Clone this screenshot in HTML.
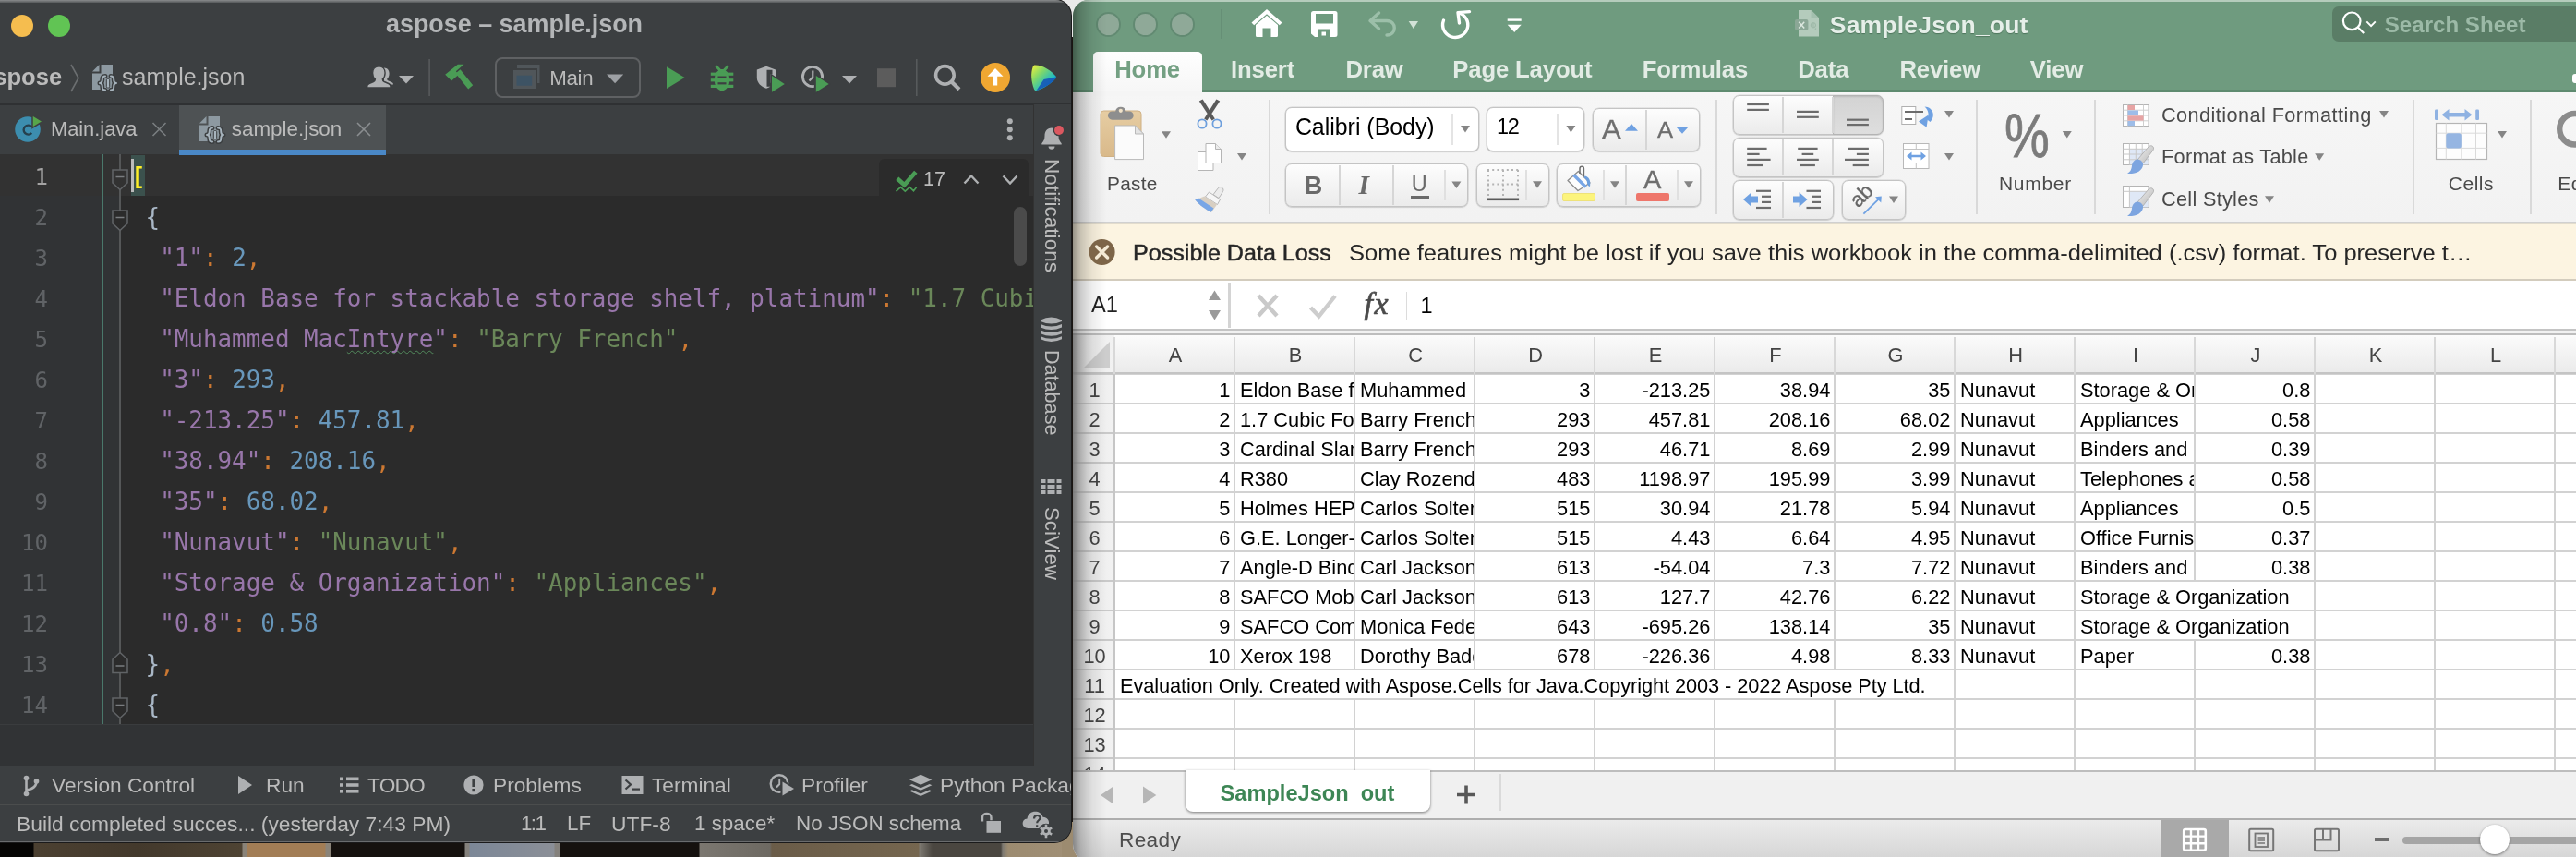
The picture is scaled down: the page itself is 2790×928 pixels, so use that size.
<!DOCTYPE html>
<html lang="en">
<head>
<meta charset="utf-8">
<title>aspose – sample.json / SampleJson_out</title>
<style>
*{box-sizing:border-box;margin:0;padding:0}
html,body{width:2790px;height:928px;overflow:hidden;background:#1b1612}
body{position:relative;font-family:"Liberation Sans",sans-serif;-webkit-font-smoothing:antialiased}
.abs{position:absolute}
.t{position:absolute;white-space:nowrap;line-height:1}
svg{position:absolute;overflow:visible}
#ide,#xl{will-change:transform}
/* ---------- desktop ---------- */
#desk{position:absolute;left:0;top:900px;width:1200px;height:28px;background:linear-gradient(90deg,#060504 0,#060504 36px,#4b4031 37px,#43392c 150px,#4e4333 262px,#8a8378 263px,#8a8378 267px,#a27d55 268px,#a27d55 352px,#8a8378 353px,#8a8378 358px,#15110e 359px,#15110e 503px,#84817c 504px,#84817c 508px,#7c8797 509px,#8b8f97 600px,#84817c 601px,#84817c 606px,#15110e 607px,#15110e 757px,#7b7770 758px,#6d6962 834px,#6a5c48 836px,#75664f 995px,#7d7971 996px,#4a4640 1010px,#4a4640 1084px,#7d7971 1086px,#9c8b70 1092px,#a3927a 1200px)}
/* ---------- IDE ---------- */
#ide{position:absolute;left:0;top:0;width:1160px;height:912px;background:#3c3f41;border-radius:0 17px 18px 0;overflow:hidden;box-shadow:0 0 0 1px #1a1a1b}
#ide .topline{position:absolute;left:0;top:0;width:1160px;height:3px;background:linear-gradient(#8a8c8d,#55585a)}
#ide .ui{color:#bbbbbb}
#tabsrow{position:absolute;left:0;top:112px;width:1119px;height:55px;background:#3c3f41;border-top:2px solid #323232}
#acttab{position:absolute;left:194px;top:114px;width:224px;height:48px;background:#4e5254}
#actline{position:absolute;left:194px;top:162px;width:224px;height:6px;background:#4a88c7;z-index:3}
#editor{position:absolute;left:0;top:167px;width:1119px;height:617px;background:#2b2b2b;overflow:hidden}
#curline{position:absolute;left:0;top:0;width:1119px;height:45px;background:#323232}
#gutbg{position:absolute;left:0;top:0;width:130px;height:617px;background:#313335}
.ln{position:absolute;left:0;width:52px;text-align:right;font-family:"DejaVu Sans Mono","Liberation Mono",monospace;font-size:24px;line-height:44px;height:44px;color:#606366}
.cl{position:absolute;left:142px;white-space:pre;font-family:"DejaVu Sans Mono","Liberation Mono",monospace;font-size:25.9px;line-height:44px;height:44px;color:#a9b7c6}
.k{color:#9876aa}.s{color:#6a8759}.n{color:#6897bb}.p{color:#cc7832}
#below{position:absolute;left:0;top:784px;width:1119px;height:45px;background:#313335;border-top:1px solid #3a3c3e}
#rstrip{position:absolute;left:1119px;top:113px;width:41px;height:716px;background:#3c3f41;border-left:1px solid #323232}
#toolbar2{position:absolute;left:0;top:829px;width:1160px;height:42px;background:#3c3f41;border-top:1px solid #36393b}
#status{position:absolute;left:0;top:871px;width:1160px;height:41px;background:#3c3f41;border-top:1px solid #4b4d4d;border-bottom:1px solid #6a6c6e}
.vt{position:absolute;white-space:nowrap;line-height:1;color:#bbbbbb;transform-origin:0 0;transform:rotate(90deg)}
/* ---------- Excel ---------- */
#xl{position:absolute;left:1162px;top:0;width:1640px;height:934px;background:#f5f5f5;border-radius:17px 0 0 20px;overflow:hidden}
#xli{position:absolute;left:-1162px;top:0;width:2802px;height:940px}
#xl .green{position:absolute;left:1162px;top:0;width:1640px;height:100px;background:#6f9b7f}
#xl .greentop{position:absolute;left:1162px;top:0;width:1640px;height:2px;background:#b5ccbc}
#hometab{position:absolute;left:1184px;top:56px;width:118px;height:46px;background:linear-gradient(#fefefe,#f6f6f6);border-radius:5px 5px 0 0}
.rt{position:absolute;white-space:nowrap;line-height:1;font-weight:bold;color:#e3ece5;font-size:25.7px;top:62.8px;letter-spacing:-.15px}
#ribbon{position:absolute;left:1162px;top:100px;width:1640px;height:142px;background:linear-gradient(#f6f6f6,#f2f2f2);border-bottom:2px solid #d0d0d0}
.vsep{position:absolute;width:2px;background:#d9d9d9;top:108px;height:124px}
.box{position:absolute;border:1px solid #c4c4c4;border-radius:7px;background:linear-gradient(#fdfdfd,#ebebeb);box-shadow:0 0 0 .6px rgba(0,0,0,.13),0 1px 1.500px rgba(0,0,0,.1)}
.wbox{position:absolute;border:1px solid #c4c4c4;border-radius:7px;background:#fff;box-shadow:0 0 0 .6px rgba(0,0,0,.13),0 1px 1.500px rgba(0,0,0,.1)}
.dv{position:absolute;width:2px;background:#d6d6d6}
.rl{position:absolute;white-space:nowrap;line-height:1;color:#4a4a4a}
#msg{position:absolute;left:1162px;top:242px;width:1640px;height:62px;background:#fcf4e1;border-top:1px solid #e2dccd;border-bottom:2px solid #d3ccbd}
#fbar{position:absolute;left:1162px;top:304px;width:1640px;height:53px;background:#fff}
#fbar2{position:absolute;left:1162px;top:356px;width:1640px;height:7px;background:linear-gradient(#c4c4c4 0,#c4c4c4 2px,#f1f1f1 2px,#f1f1f1 5px,#bdbdbd 5px)}
#namebox{position:absolute;left:1164px;top:306px;width:169px;height:49px;background:#fff;border-right:3px solid #d4d4d4}
#grid{position:absolute;left:1162px;top:363px;width:1640px;height:471px;background:#fff;overflow:hidden}
#gi{position:absolute;left:-1162px;top:-363px;width:2802px;height:940px}
#colhdr{position:absolute;left:1162px;top:363px;width:1640px;height:42px;background:linear-gradient(#fbfbfb,#eaeaea)}
#rowhdr{position:absolute;left:1162px;top:363px;width:45px;height:471px;background:linear-gradient(90deg,#cfcfcf,#ececec 35%,#f2f2f2)}
.hl{position:absolute;left:1207px;width:1600px;height:2px;background:#d2d2d2}
.hlr{position:absolute;left:1162px;width:46px;height:2px;background:#c9c9c9}
.vl{position:absolute;top:405px;width:2px;height:430px;background:#d2d2d2}
.vh{position:absolute;top:365px;width:2px;height:40px;background:#d8d8d8}
.ch{position:absolute;top:365px;height:40px;line-height:40px;width:130px;text-align:center;font-size:21.8px;color:#444}
.rh{position:absolute;left:1164px;width:43px;text-align:center;font-size:21.8px;color:#444;line-height:34px;height:32px}
.c{position:absolute;height:30px;line-height:34px;font-size:21.8px;color:#000;white-space:nowrap;overflow:hidden;background:#fff;width:128px}
.c.r{text-align:right;padding-right:3.6px}
.c.l{text-align:left;padding-left:5px}
#sheetbar{position:absolute;left:1162px;top:834px;width:1640px;height:54px;background:#f0f0f0;border-top:2px solid #bdbdbd}
#sheettab{position:absolute;left:1284px;top:834px;width:265px;height:45px;background:#fff;border-radius:0 0 8px 8px;box-shadow:0 1px 3px rgba(0,0,0,.5)}
#xstatus{position:absolute;left:1162px;top:886px;width:1640px;height:54px;background:linear-gradient(#ebebeb,#d0d0d0);border-top:2px solid #aeaeae}
#xshadow{position:absolute;left:1160px;top:0;width:38px;height:940px;background:linear-gradient(90deg,rgba(0,0,0,.44),rgba(0,0,0,.2) 28%,rgba(0,0,0,.07) 60%,rgba(0,0,0,0));pointer-events:none}
#xshadowg{display:none}
</style>
</head>
<body>
<div id="topgap" class="abs" style="left:1130px;top:0;width:80px;height:40px;background:#e9e9e9"></div>
<div id="desk"></div>
<div id="deskr" class="abs" style="left:1150px;top:890px;width:40px;height:38px;background:#9c8b70"></div>

<!-- =================== IDE WINDOW =================== -->
<div id="ide">
  <div class="topline"></div>
  <!-- title -->
  <div class="abs" style="left:12px;top:16px;width:24px;height:24px;border-radius:50%;background:#f5bd4f"></div>
  <div class="abs" style="left:52px;top:16px;width:24px;height:24px;border-radius:50%;background:#61c454"></div>
  <span class="t" style="left:418px;top:13.2px;font-size:26.9px;font-weight:bold;color:#b4b6b8">aspose – sample.json</span>

  <!-- toolbar -->
  <span class="t ui" style="left:-21px;top:70.6px;font-size:25.6px;font-weight:bold">aspose</span>
  <span class="t ui" style="left:132px;top:71px;font-size:25px">sample.json</span>
  <div class="abs" style="left:536px;top:62px;width:158px;height:44px;border:2px solid #5f6163;border-radius:8px"></div>
  <span class="t ui" style="left:595.3px;top:73.8px;font-size:22.3px;letter-spacing:-.35px">Main</span>
  <div class="abs" style="left:0;top:112px;width:1160px;height:2px;background:#2f3133"></div>

  <!-- tabs -->
  <div id="acttab"></div><div id="actline"></div>
  <span class="t ui" style="left:55px;top:129.2px;font-size:21.8px">Main.java</span>
  <span class="t ui" style="left:250.8px;top:129px;font-size:22.4px">sample.json</span>

  <!-- editor -->
  <div id="editor">
    <div id="gutbg"></div>
    <div id="curline"></div>
    <div class="abs" style="left:110px;top:0;width:2px;height:617px;background:#4a786b"></div>
    <div class="abs" style="left:129px;top:0;width:2px;height:617px;background:#555758"></div>
    <div class="abs" style="left:142px;top:1px;width:15px;height:44px;background:#3b514d"></div>
    <div class="abs" style="left:142px;top:5px;width:3px;height:36px;background:#bbbbbb"></div>
    <div class="ln" style="top:2.7px;color:#a4a3a3">1</div>
    <div class="ln" style="top:46.7px">2</div>
    <div class="ln" style="top:90.7px">3</div>
    <div class="ln" style="top:134.7px">4</div>
    <div class="ln" style="top:178.7px">5</div>
    <div class="ln" style="top:222.7px">6</div>
    <div class="ln" style="top:266.7px">7</div>
    <div class="ln" style="top:310.7px">8</div>
    <div class="ln" style="top:354.7px">9</div>
    <div class="ln" style="top:398.7px">10</div>
    <div class="ln" style="top:442.7px">11</div>
    <div class="ln" style="top:486.7px">12</div>
    <div class="ln" style="top:530.7px">13</div>
    <div class="ln" style="top:574.7px">14</div>
    <div class="cl" style="top:1.7px"><b style="color:#ffef28">[</b></div>
    <div class="cl" style="top:45.7px"> {</div>
    <div class="cl" style="top:89.7px">  <span class="k">"1"</span><span class="p">:</span> <span class="n">2</span><span class="p">,</span></div>
    <div class="cl" style="top:133.7px">  <span class="k">"Eldon Base for stackable storage shelf, platinum"</span><span class="p">:</span> <span class="s">"1.7 Cubic Foot Compact \"Cube\" Office Refrigerators"</span><span class="p">,</span></div>
    <div class="cl" style="top:177.7px">  <span class="k">"Muhammed Mac<span style="text-decoration:underline wavy #528a5c 1.3px;text-underline-offset:3px;text-decoration-skip-ink:none">Intyre</span>"</span><span class="p">:</span> <span class="s">"Barry French"</span><span class="p">,</span></div>
    <div class="cl" style="top:221.7px">  <span class="k">"3"</span><span class="p">:</span> <span class="n">293</span><span class="p">,</span></div>
    <div class="cl" style="top:265.7px">  <span class="k">"-213.25"</span><span class="p">:</span> <span class="n">457.81</span><span class="p">,</span></div>
    <div class="cl" style="top:309.7px">  <span class="k">"38.94"</span><span class="p">:</span> <span class="n">208.16</span><span class="p">,</span></div>
    <div class="cl" style="top:353.7px">  <span class="k">"35"</span><span class="p">:</span> <span class="n">68.02</span><span class="p">,</span></div>
    <div class="cl" style="top:397.7px">  <span class="k">"Nunavut"</span><span class="p">:</span> <span class="s">"Nunavut"</span><span class="p">,</span></div>
    <div class="cl" style="top:441.7px">  <span class="k">"Storage &amp; Organization"</span><span class="p">:</span> <span class="s">"Appliances"</span><span class="p">,</span></div>
    <div class="cl" style="top:485.7px">  <span class="k">"0.8"</span><span class="p">:</span> <span class="n">0.58</span></div>
    <div class="cl" style="top:529.7px"> }<span class="p">,</span></div>
    <div class="cl" style="top:573.7px"> {</div>
    <!-- inspection widget -->
    <div class="abs" style="left:952px;top:5px;width:162px;height:41px;background:#2b2b2b;border-radius:6px 6px 0 0"></div>
    <span class="t ui" style="left:1000px;top:17px;font-size:21.5px">17</span>
    <!-- scrollbar thumb -->
    <div class="abs" style="left:1098px;top:57px;width:14px;height:64px;border-radius:7px;background:#4b4b4b"></div>
  </div>
  <div id="below"></div>
  <div id="rstrip"></div>
  <span class="vt" style="left:1149.500px;top:171.500px;font-size:22.600px">Notifications</span>
  <span class="vt" style="left:1150px;top:379px;font-size:21.600px">Database</span>
  <span class="vt" style="left:1150px;top:548.500px;font-size:22.300px">SciView</span>

  <!-- bottom tool window bar -->
  <div id="toolbar2"></div>
  <span class="t ui" style="left:56px;top:838.9px;font-size:22.7px">Version Control</span>
  <span class="t ui" style="left:288px;top:838.9px;font-size:22.7px">Run</span>
  <span class="t ui" style="left:398px;top:838.9px;font-size:22.7px;letter-spacing:-.8px">TODO</span>
  <span class="t ui" style="left:534px;top:838.9px;font-size:22.7px">Problems</span>
  <span class="t ui" style="left:706px;top:838.9px;font-size:22.7px">Terminal</span>
  <span class="t ui" style="left:868px;top:838.9px;font-size:22.7px">Profiler</span>
  <span class="t ui" style="left:1018px;top:838.9px;font-size:22.7px">Python Packages</span>
  <!-- status bar -->
  <div id="status"></div>
  <span class="t ui" style="left:18px;top:880.9px;font-size:22.8px">Build completed succes... (yesterday 7:43 PM)</span>
  <span class="t ui" style="left:564px;top:880.9px;font-size:22.4px;letter-spacing:-1.6px">1:1</span>
  <span class="t ui" style="left:614px;top:880.9px;font-size:22.4px">LF</span>
  <span class="t ui" style="left:662px;top:880.9px;font-size:22.8px">UTF-8</span>
  <span class="t ui" style="left:752px;top:880.9px;font-size:22.4px">1 space*</span>
  <span class="t ui" style="left:862px;top:880.9px;font-size:22.4px">No JSON schema</span>
<svg style="left:0;top:0" width="1160" height="912" viewBox="0 0 1160 912">
  <defs>
    <g id="jsonic">
      <path d="M9.5 0H22V27H0V9.5H9.5Z" fill="#8d99a1"/>
      <path d="M0 7.5L7.5 0V7.5Z" fill="#8d99a1"/>
      <g fill="none" stroke-linecap="round" stroke-linejoin="round">
        <path d="M14 12.5c-3 0-3.2 1.2-3.2 3.6s-.6 3.9-2.8 3.9c2.2 0 2.8 1.5 2.8 3.9s.2 3.6 3.2 3.6M20 12.5c3 0 3.2 1.2 3.2 3.6s.6 3.9 2.8 3.9c-2.2 0-2.8 1.5-2.8 3.9s-.2 3.6-3.2 3.6" stroke="#3c3f41" stroke-width="5"/>
        <path d="M14 12.5c-3 0-3.2 1.2-3.2 3.6s-.6 3.9-2.8 3.9c2.2 0 2.8 1.5 2.8 3.9s.2 3.6 3.2 3.6M20 12.5c3 0 3.2 1.2 3.2 3.6s.6 3.9 2.8 3.9c-2.2 0-2.8 1.5-2.8 3.9s-.2 3.6-3.2 3.6" stroke="#a7b4bd" stroke-width="2"/>
      </g>
      <rect x="15.3" y="15.5" width="3.4" height="9.5" rx="1.2" fill="#a7b4bd" stroke="#3c3f41" stroke-width="1"/>
    </g>
    <linearGradient id="lg1" x1="0" y1="0" x2="1" y2="1">
      <stop offset="0" stop-color="#f6f03a"/><stop offset=".35" stop-color="#7fd86a"/><stop offset=".7" stop-color="#19b8c9"/><stop offset="1" stop-color="#1563c8"/>
    </linearGradient>
  </defs>
  <!-- breadcrumb chevron + file icon -->
  <path d="M77 70L85 84.5L77 99" stroke="#6b6e70" stroke-width="1.6" fill="none"/>
  <use href="#jsonic" x="100" y="70"/>
  <!-- users icon -->
  <g fill="#aeb0b2">
    <path d="M416 73.5c3.6 0 5.6 2.8 5.6 6.2 0 2.6-1 4.6-2.4 5.8 0 1 .5 1.6 1.6 2.1l3.4 1.4c1.2.5 1.8 1.3 1.8 2.4H416Z"/>
    <path d="M410.5 71.8c4.2 0 6.6 3.1 6.6 7.2 0 3-1.1 5.3-2.8 6.7 0 1.400.600 2.200 1.900 2.800l4.600 2c1.700.7 2.400 2 2.400 4.500H397.500c0-2.500.7-3.800 2.400-4.500l4.600-2c1.300-.6 1.900-1.400 1.900-2.800-1.700-1.400-2.800-3.700-2.800-6.700 0-4.100 2.400-7.200 6.900-7.200Z" stroke="#3c3f41" stroke-width="1.4"/>
  </g>
  <path d="M432 82H448L440 90.5Z" fill="#aeb0b2"/>
  <rect x="464.300" y="64" width="1.600" height="40" fill="#575a5c"/>
  <!-- hammer -->
  <g fill="#4a9c55">
    <path d="M482.200 80.800L495.800 69.800H502.500L493.800 77.200L496.800 80.800L489 87.500Z"/>
    <path d="M493.500 79.500L498.500 75.300L512.200 92.200L507.200 96.600Z"/>
  </g>
  <!-- run config icon -->
  <path d="M560 70H584.500V90H582V74H560Z" fill="#50565a"/>
  <rect x="556" y="76" width="24" height="20" fill="#50565a"/>
  <rect x="559.500" y="81.700" width="16.700" height="11" fill="#3d5364"/>
  <path d="M657 80.500H675.200L666.100 90.200Z" fill="#9da0a4"/>
  <!-- run -->
  <path d="M722 72.200L741.600 84.100L722 96Z" fill="#4a9c55"/>
  <!-- debug bug -->
  <g fill="#4a9c55">
    <ellipse cx="782" cy="86.500" rx="8.300" ry="11.600"/>
    <path d="M774.500 72.500l2-2 4.200 4.500h2.600l4.200-4.500 2 2-3.900 4.200h-7.200z"/>
    <rect x="769.800" y="78.600" width="24.500" height="3.200"/>
    <rect x="769.800" y="85.200" width="24.500" height="3.200"/>
    <rect x="769.800" y="91.800" width="24.500" height="3.200"/>
  </g>
  <rect x="777.500" y="82.500" width="9" height="2.200" fill="#3c3f41"/>
  <rect x="777.500" y="89.200" width="9" height="2.200" fill="#3c3f41"/>
  <!-- coverage -->
  <path d="M819.800 75.500L830 71.800L840 75.500V84c0 6-4.500 9.800-10 11.800-5.500-2-10.200-5.800-10.200-11.800Z" fill="#aeb0b2"/>
  <path d="M830.500 75.800h6v4.500h-2.500v9.500h2.500v4h-6z" fill="#3c3f41"/>
  <path d="M834.200 79.200L852 90.900L834.200 102.500Z" fill="#3c3f41"/>
  <path d="M836 82L849.800 90.900L836 99.700Z" fill="#4a9c55"/>
  <!-- profiler -->
  <circle cx="880" cy="83" r="10.600" fill="none" stroke="#aeb0b2" stroke-width="2.800"/>
  <path d="M880.300 76.500V83.500L876.500 87.500" fill="none" stroke="#aeb0b2" stroke-width="2.200"/>
  <path d="M881.800 79.200L900 90.900L881.800 102.500Z" fill="#3c3f41"/>
  <path d="M883.800 82L897.700 90.900L883.800 99.700Z" fill="#4a9c55"/>
  <path d="M912 82H928L920 90.500Z" fill="#aeb0b2"/>
  <rect x="950" y="74.200" width="20" height="20" fill="#5c5c5c"/>
  <rect x="992" y="64" width="1.600" height="40" fill="#575a5c"/>
  <!-- search -->
  <circle cx="1023.400" cy="81.400" r="9.800" fill="none" stroke="#aeb0b2" stroke-width="3.600"/>
  <path d="M1030.500 88.500L1039 96.800" stroke="#aeb0b2" stroke-width="4.200" fill="none"/>
  <!-- update -->
  <circle cx="1078" cy="83.900" r="16" fill="#f0a732"/>
  <path d="M1078 74L1086.500 82.800H1080.200V92.500H1075.800V82.800H1069.500Z" fill="#fff"/>
  <!-- logo -->
  <path d="M1121 70.500C1130 70.500 1139 77 1143.500 82.500c.7 .9 .7 1.700 0 2.400C1138 91 1130 96 1122.500 98c-1.200 .3-2-.2-2.500-1.400C1117 88 1116 80 1118.800 72c.4-1 1.200-1.500 2.200-1.500Z" fill="url(#lg1)"/>
  <path d="M1130.500 86L1144 83.500c.3 .5 .2 1-.5 1.600C1138 91 1130 96 1122.500 98Z" fill="#1450b8" opacity=".85"/>
  <!-- tab icons -->
  <circle cx="30" cy="140" r="13.800" fill="#3c8dae"/>
  <path d="M34.300 137.200a5 5 0 1 0 0 6.800" fill="none" stroke="#26404d" stroke-width="2.400"/>
  <path d="M35 124.500L46.500 131.500L35 138.500Z" fill="#57a64a" stroke="#3c3f41" stroke-width="1.500"/>
  <path d="M165.500 133L179.500 147M179.500 133L165.500 147" stroke="#7a7e80" stroke-width="1.600"/>
  <use href="#jsonic" x="216" y="126"/>
  <path d="M387 133L401 147M401 133L387 147" stroke="#8a8e90" stroke-width="1.600"/>
  <circle cx="1093.800" cy="131.300" r="3" fill="#aeb0b2"/><circle cx="1093.800" cy="140.300" r="3" fill="#aeb0b2"/><circle cx="1093.800" cy="149.200" r="3" fill="#aeb0b2"/>
  <!-- bell -->
  <path d="M1139 138.500c5 0 7.500 3.800 7.500 8.500 0 4 1.200 6 3.200 8.200v1.300h-21.400v-1.300c2-2.200 3.200-4.200 3.200-8.200 0-4.700 2.500-8.500 7.500-8.500Z" fill="#aeb0b2"/>
  <path d="M1135.500 158.500h7c0 2-1.500 3.300-3.500 3.300s-3.500-1.300-3.500-3.300Z" fill="#aeb0b2"/>
  <circle cx="1147" cy="141" r="6.300" fill="#3c3f41"/><circle cx="1147" cy="141" r="5" fill="#db5860"/>
  <!-- fold markers -->
  <g fill="#2b2b2b" stroke="#606366" stroke-width="1.600">
    <path d="M122 184H138V198L130 205.500L122 198Z" fill="#323232"/>
    <path d="M122 228H138V242L130 249.500L122 242Z"/>
    <path d="M122 728.500H138V714L130 706.500L122 714Z"/>
    <path d="M122 756H138V770L130 777.500L122 770Z"/>
  </g>
  <path d="M125.500 191.500H134.500M125.500 235.500H134.500M125.500 721H134.500M125.500 763.500H134.500" stroke="#7a7d80" stroke-width="1.600"/>
  <!-- inspection widget -->
  <path d="M971.800 193.300L979.500 200.200L991.800 186.300" fill="none" stroke="#4a9c55" stroke-width="4.600"/>
  <path d="M970.500 207.200L975.500 202.600L980.300 207.200L985.200 202.600L989.500 206.700L992.600 202.800" fill="none" stroke="#4a9c55" stroke-width="1.600"/>
  <path d="M1044.500 198.500L1052 190.500L1059.500 198.500" fill="none" stroke="#aeb0b2" stroke-width="2.400"/>
  <path d="M1086.500 190.500L1094 198.500L1101.500 190.500" fill="none" stroke="#aeb0b2" stroke-width="2.400"/>
  <!-- right strip icons -->
  <g fill="#aeb0b2">
    <path d="M1127 346.500q11.500-6 23 0v1.500q-11.500 5-23 0zM1127 351q11.500 5 23 0v3.600q-11.500 5-23 0zM1127 357.600q11.500 5 23 0v3.600q-11.500 5-23 0zM1127 364.200q11.500 5 23 0v3q-11.500 5.500-23 0z"/>
    <path d="M1127.500 519h5v4h-5zM1134.500 519h8v4h-8zM1144.500 519h5v4h-5zM1127.500 525h5v4h-5zM1134.500 525h8v4h-8zM1144.500 525h5v4h-5zM1127.500 531h5v4h-5zM1134.500 531h8v4h-8zM1144.500 531h5v4h-5z"/>
  </g>
  <!-- bottom tool bar icons -->
  <g fill="none" stroke="#aeb0b2" stroke-width="2.600">
    <circle cx="28.500" cy="842.500" r="2.800" fill="#aeb0b2" stroke="none"/>
    <circle cx="28.500" cy="859.500" r="2.800" fill="#aeb0b2" stroke="none"/>
    <circle cx="39.500" cy="846" r="2.800" fill="#aeb0b2" stroke="none"/>
    <path d="M28.500 842.500V859.500M39.500 846c0 6-4 8.500-11 9.500"/>
  </g>
  <path d="M258 840L273 850L258 860Z" fill="#aeb0b2"/>
  <g fill="#aeb0b2">
    <rect x="368" y="841.500" width="4" height="3.600"/><rect x="375" y="841.500" width="13.500" height="3.600"/>
    <rect x="368" y="848.200" width="4" height="3.600"/><rect x="375" y="848.200" width="13.500" height="3.600"/>
    <rect x="368" y="855" width="4" height="3.600"/><rect x="375" y="855" width="13.500" height="3.600"/>
  </g>
  <circle cx="513" cy="850" r="10.600" fill="#aeb0b2"/>
  <rect x="511.400" y="843.500" width="3.200" height="8.500" fill="#3c3f41"/><rect x="511.400" y="854" width="3.200" height="3.200" fill="#3c3f41"/>
  <rect x="673.500" y="840" width="23" height="20" fill="#aeb0b2"/>
  <path d="M677.500 844.500L683 849.500L677.500 854.500" fill="none" stroke="#3c3f41" stroke-width="2.200"/>
  <rect x="684.500" y="853.500" width="8.500" height="2.200" fill="#3c3f41"/>
  <circle cx="844" cy="848.500" r="9.300" fill="none" stroke="#aeb0b2" stroke-width="2.400"/>
  <path d="M844.300 843V849L841 852.500" fill="none" stroke="#aeb0b2" stroke-width="2"/>
  <path d="M845.500 843L863.500 854L845.500 865Z" fill="#3c3f41"/>
  <path d="M847.500 846.500L860 854L847.500 861.500Z" fill="#aeb0b2"/>
  <g fill="#aeb0b2">
    <path d="M997.200 838.700L1009.400 844.200L997.200 849.700L985 844.200Z"/>
    <path d="M987.800 849L985 850.300L997.200 855.800L1009.400 850.300L1006.600 849L997.200 853.200Z"/>
    <path d="M987.800 855.200L985 856.500L997.200 862L1009.400 856.500L1006.600 855.200L997.200 859.400Z"/>
  </g>
  <!-- status icons -->
  <path d="M1064 889.500v-4.300c0-5.800 9.500-5.800 9.500 0v3" fill="none" stroke="#aeb0b2" stroke-width="2.400"/>
  <rect x="1068.500" y="889" width="15.500" height="12.800" fill="#aeb0b2"/>
  <path d="M1113.500 897c-7.500 0-7.800-10 -1-10.500 1-9.500 14.500-10.500 17-1.800 5 .2 7 4 6.500 7-.3 3-2.500 5.300-6 5.300Z" fill="#aeb0b2"/>
  <path d="M1120 886.500c0-4.500 6.500-4.500 6.500-.8 0 2.600-3.300 2.600-3.300 5.600M1123.200 893.300v2" fill="none" stroke="#3c3f41" stroke-width="2.200"/>
  <circle cx="1133" cy="900" r="8.300" fill="#3c3f41"/>
  <g stroke="#aeb0b2" stroke-width="2.600">
    <path d="M1133 892.800V907.200M1126.800 896.400L1139.200 903.600M1126.800 903.600L1139.200 896.400"/>
  </g>
  <circle cx="1133" cy="900" r="4.800" fill="#aeb0b2"/><circle cx="1133" cy="900" r="2" fill="#3c3f41"/>
</svg>

</div>
<!-- =================== EXCEL WINDOW =================== -->
<div id="xl"><div id="xli">
  <div class="green"></div><div class="greentop"></div>
  <div class="abs" style="left:1162px;top:97px;width:1640px;height:3px;background:#5f8b70"></div>
  <div id="xshadowg"></div>
  <!-- traffic lights -->
  <div class="abs" style="left:1186.500px;top:12.500px;width:27px;height:27px;border-radius:50%;background:#8fa998;border:2px solid #628a72"></div>
  <div class="abs" style="left:1226.500px;top:12.500px;width:27px;height:27px;border-radius:50%;background:#8fa998;border:2px solid #628a72"></div>
  <div class="abs" style="left:1266.500px;top:12.500px;width:27px;height:27px;border-radius:50%;background:#8fa998;border:2px solid #628a72"></div>
  <div class="abs" style="left:1322px;top:10px;width:2px;height:32px;background:#668f76"></div>
  <span class="t" style="left:1981.800px;top:14.400px;font-size:26.500px;font-weight:bold;color:#e6efe9;letter-spacing:.2px;text-shadow:0 1px 1px rgba(40,70,50,.45)">SampleJson_out</span>
  <div class="abs" style="left:2526px;top:7px;width:300px;height:38px;border-radius:7px;background:#5a7d66"></div>
  <span class="t" style="left:2582.800px;top:15.200px;font-size:24.100px;font-weight:bold;color:#9cbaa7">Search Sheet</span>
  <!-- ribbon tabs -->
  <div id="hometab"></div>
  <span class="rt" style="left:1207.200px;color:#74a083">Home</span>
  <span class="rt" style="left:1333px">Insert</span>
  <span class="rt" style="left:1457.400px">Draw</span>
  <span class="rt" style="left:1573.300px">Page Layout</span>
  <span class="rt" style="left:1778.700px">Formulas</span>
  <span class="rt" style="left:1947.200px">Data</span>
  <span class="rt" style="left:2057.400px">Review</span>
  <span class="rt" style="left:2198.800px">View</span>

  <!-- ribbon -->
  <div id="ribbon"></div>
  <div class="abs" style="left:1184px;top:98px;width:118px;height:6px;background:#f5f5f5"></div>
  <span class="rl" style="left:1199px;top:188.800px;font-size:20.800px;letter-spacing:.3px">Paste</span>
  <div class="vsep" style="left:1374px"></div>
  <div class="wbox" style="left:1392px;top:116px;width:210px;height:48px"></div>
  <span class="t" style="left:1402.900px;top:124.800px;font-size:24.900px;color:#000">Calibri (Body)</span>
  <div class="dv" style="left:1572px;top:123px;height:34px;background:#e4e4e4"></div>
  <div class="wbox" style="left:1610px;top:116px;width:106px;height:48px"></div>
  <span class="t" style="left:1620.900px;top:126.300px;font-size:23.500px;color:#000;letter-spacing:-1.2px">12</span>
  <div class="dv" style="left:1686px;top:123px;height:34px;background:#e4e4e4"></div>
  <div class="box" style="left:1725px;top:117px;width:116px;height:47px"></div>
  <div class="dv" style="left:1782px;top:119px;height:43px"></div>
  <span class="t" style="left:1735.400px;top:124.500px;font-size:29.600px;color:#6e6e6e;-webkit-text-stroke:.3px #6e6e6e;transform:scaleX(1.05);transform-origin:0 0">A</span>
  <span class="t" style="left:1795.300px;top:128.800px;font-size:24.600px;color:#6e6e6e;-webkit-text-stroke:.3px #6e6e6e;transform:scaleX(1.04);transform-origin:0 0">A</span>
  <!-- B I U -->
  <div class="box" style="left:1392px;top:177px;width:198px;height:47px"></div>
  <div class="dv" style="left:1450px;top:179px;height:43px"></div>
  <div class="dv" style="left:1508px;top:179px;height:43px"></div>
  <div class="dv" style="left:1564px;top:184px;height:33px;background:#e0e0e0"></div>
  <span class="t" style="left:1412.500px;top:187px;font-size:27.400px;font-weight:bold;color:#6a6a6a">B</span>
  <span class="t" style="left:1471.500px;top:185.500px;font-size:29.500px;font-weight:bold;font-style:italic;font-family:'Liberation Serif',serif;color:#6a6a6a">I</span>
  <span class="t" style="left:1528.800px;top:188px;font-size:23.500px;color:#6a6a6a">U</span>
  <div class="abs" style="left:1528px;top:212px;width:19.600px;height:2.500px;background:#6a6a6a"></div>
  <!-- borders -->
  <div class="box" style="left:1599px;top:177px;width:79px;height:47px"></div>
  <div class="dv" style="left:1652px;top:184px;height:33px;background:#e0e0e0"></div>
  <!-- fill / font colour -->
  <div class="box" style="left:1686px;top:177px;width:156px;height:47px"></div>
  <div class="dv" style="left:1736px;top:184px;height:33px;background:#e0e0e0"></div>
  <div class="dv" style="left:1760px;top:179px;height:43px"></div>
  <div class="dv" style="left:1816px;top:184px;height:33px;background:#e0e0e0"></div>
  <div class="abs" style="left:1692px;top:208.500px;width:35.500px;height:9.500px;border-radius:2px;background:#fcf47c;border:1px solid #eee27a"></div>
  <div class="abs" style="left:1772px;top:208.500px;width:36px;height:9.500px;border-radius:2px;background:#ee766b"></div>
  <span class="t" style="left:1780.300px;top:180.600px;font-size:27.600px;color:#6e6e6e;-webkit-text-stroke:.4px #6e6e6e;transform:scaleX(1.05);transform-origin:0 0">A</span>
  <div class="vsep" style="left:1858px"></div>
  <!-- alignment -->
  <div class="box" style="left:1877px;top:103px;width:163px;height:43px"></div>
  <div class="abs" style="left:1985px;top:103px;width:55px;height:43px;background:linear-gradient(#d3d3d3,#dedede);border-radius:0 7px 7px 0;border:1px solid #b4b4b4;box-shadow:inset 0 1px 2px rgba(0,0,0,.12)"></div>
  <div class="dv" style="left:1930px;top:105px;height:39px"></div>
  <div class="dv" style="left:1984px;top:105px;height:39px"></div>
  <div class="box" style="left:1877px;top:149px;width:163px;height:43px"></div>
  <div class="dv" style="left:1930px;top:151px;height:39px"></div>
  <div class="dv" style="left:1984px;top:151px;height:39px"></div>
  <div class="box" style="left:1877px;top:195px;width:109px;height:43px"></div>
  <div class="dv" style="left:1930px;top:197px;height:39px"></div>
  <div class="box" style="left:1995px;top:195px;width:69px;height:43px"></div>
  <span class="t" style="left:2004px;top:200.500px;font-size:22.500px;color:#666;-webkit-text-stroke:.3px #666;transform:rotate(-45deg);transform-origin:50% 50%">ab</span>
  <div class="vsep" style="left:2140px"></div>
  <span class="t" style="left:2171px;top:113.500px;font-size:66px;color:#7b7b7b;-webkit-text-stroke:.8px #7b7b7b;transform:scaleX(.83);transform-origin:0 0">%</span>
  <span class="rl" style="left:2165px;top:188.300px;font-size:21px;letter-spacing:.7px">Number</span>
  <div class="vsep" style="left:2268px"></div>
  <span class="rl" style="left:2341px;top:113.500px;font-size:21.700px;letter-spacing:.43px">Conditional Formatting</span>
  <span class="rl" style="left:2341px;top:159.300px;font-size:21.700px;letter-spacing:.3px">Format as Table</span>
  <span class="rl" style="left:2341px;top:205.300px;font-size:21.700px;letter-spacing:.3px">Cell Styles</span>
  <div class="vsep" style="left:2612.500px"></div>
  <span class="rl" style="left:2651.800px;top:188.300px;font-size:21px;letter-spacing:.5px">Cells</span>
  <div class="vsep" style="left:2740px"></div>
  <span class="rl" style="left:2770.300px;top:188.300px;font-size:21px;letter-spacing:.5px">Editing</span>

  <!-- message bar -->
  <div id="msg"></div>
  <span class="t" style="left:1226.800px;top:262.600px;font-size:23.100px;color:#262626;-webkit-text-stroke:.45px #262626;transform:scaleX(1.087);transform-origin:0 0">Possible Data Loss</span>
  <span class="t" style="left:1461px;top:262.600px;font-size:23.100px;color:#262626;transform:scaleX(1.105);transform-origin:0 0">Some features might be lost if you save this workbook in the comma-delimited (.csv) format. To preserve t…</span>

  <!-- formula bar -->
  <div id="fbar"></div><div id="fbar2"></div>
  <div id="namebox"></div>
  <span class="t" style="left:1182px;top:318.800px;font-size:23.600px;color:#222">A1</span>
  <span class="t" style="left:1477.500px;top:311.500px;font-size:34px;font-style:italic;font-family:'Liberation Serif',serif;color:#4a4a4a;-webkit-text-stroke:.7px #4a4a4a;letter-spacing:1.5px">fx</span>
  <div class="abs" style="left:1522.500px;top:316px;width:1.500px;height:30px;background:#dcdcdc"></div>
  <span class="t" style="left:1538.500px;top:319.600px;font-size:23.500px;color:#000">1</span>
  <!-- grid -->
  <div id="grid"><div id="gi">
  <div id="colhdr"></div><div id="rowhdr"></div>
  <div class="hl" style="top:404px"></div><div class="hlr" style="top:404px"></div>
  <div class="hl" style="top:436px"></div><div class="hlr" style="top:436px"></div>
  <div class="hl" style="top:468px"></div><div class="hlr" style="top:468px"></div>
  <div class="hl" style="top:500px"></div><div class="hlr" style="top:500px"></div>
  <div class="hl" style="top:532px"></div><div class="hlr" style="top:532px"></div>
  <div class="hl" style="top:564px"></div><div class="hlr" style="top:564px"></div>
  <div class="hl" style="top:596px"></div><div class="hlr" style="top:596px"></div>
  <div class="hl" style="top:628px"></div><div class="hlr" style="top:628px"></div>
  <div class="hl" style="top:660px"></div><div class="hlr" style="top:660px"></div>
  <div class="hl" style="top:692px"></div><div class="hlr" style="top:692px"></div>
  <div class="hl" style="top:724px"></div><div class="hlr" style="top:724px"></div>
  <div class="hl" style="top:756px"></div><div class="hlr" style="top:756px"></div>
  <div class="hl" style="top:788px"></div><div class="hlr" style="top:788px"></div>
  <div class="hl" style="top:820px"></div><div class="hlr" style="top:820px"></div>
  <div class="abs" style="left:1162px;top:403px;width:1640px;height:2px;background:#c4c4c4"></div>
  <div class="vl" style="left:1206px"></div><div class="vh" style="left:1206px"></div>
  <div class="vl" style="left:1336px"></div><div class="vh" style="left:1336px"></div>
  <div class="vl" style="left:1466px"></div><div class="vh" style="left:1466px"></div>
  <div class="vl" style="left:1596px"></div><div class="vh" style="left:1596px"></div>
  <div class="vl" style="left:1726px"></div><div class="vh" style="left:1726px"></div>
  <div class="vl" style="left:1856px"></div><div class="vh" style="left:1856px"></div>
  <div class="vl" style="left:1986px"></div><div class="vh" style="left:1986px"></div>
  <div class="vl" style="left:2116px"></div><div class="vh" style="left:2116px"></div>
  <div class="vl" style="left:2246px"></div><div class="vh" style="left:2246px"></div>
  <div class="vl" style="left:2376px"></div><div class="vh" style="left:2376px"></div>
  <div class="vl" style="left:2506px"></div><div class="vh" style="left:2506px"></div>
  <div class="vl" style="left:2636px"></div><div class="vh" style="left:2636px"></div>
  <div class="vl" style="left:2766px"></div><div class="vh" style="left:2766px"></div>
  <div class="abs" style="left:1206px;top:405px;width:2px;height:430px;background:#c6c6c6"></div>
  <div class="ch" style="left:1208px">A</div>
  <div class="ch" style="left:1338px">B</div>
  <div class="ch" style="left:1468px">C</div>
  <div class="ch" style="left:1598px">D</div>
  <div class="ch" style="left:1728px">E</div>
  <div class="ch" style="left:1858px">F</div>
  <div class="ch" style="left:1988px">G</div>
  <div class="ch" style="left:2118px">H</div>
  <div class="ch" style="left:2248px">I</div>
  <div class="ch" style="left:2378px">J</div>
  <div class="ch" style="left:2508px">K</div>
  <div class="ch" style="left:2638px">L</div>
  <div class="ch" style="left:2768px">M</div>
  <div class="rh" style="top:406px">1</div>
  <div class="rh" style="top:438px">2</div>
  <div class="rh" style="top:470px">3</div>
  <div class="rh" style="top:502px">4</div>
  <div class="rh" style="top:534px">5</div>
  <div class="rh" style="top:566px">6</div>
  <div class="rh" style="top:598px">7</div>
  <div class="rh" style="top:630px">8</div>
  <div class="rh" style="top:662px">9</div>
  <div class="rh" style="top:694px">10</div>
  <div class="rh" style="top:726px">11</div>
  <div class="rh" style="top:758px">12</div>
  <div class="rh" style="top:790px">13</div>
  <div class="rh" style="top:822px">14</div>
  <div class="c r" style="left:1208px;top:406px;width:128px">1</div>
  <div class="c l" style="left:1338px;top:406px;width:128px">Eldon Base for stackable storage shelf, platinum</div>
  <div class="c l" style="left:1468px;top:406px;width:128px">Muhammed MacIntyre</div>
  <div class="c r" style="left:1598px;top:406px;width:128px">3</div>
  <div class="c r" style="left:1728px;top:406px;width:128px">-213.25</div>
  <div class="c r" style="left:1858px;top:406px;width:128px">38.94</div>
  <div class="c r" style="left:1988px;top:406px;width:128px">35</div>
  <div class="c l" style="left:2118px;top:406px;width:128px">Nunavut</div>
  <div class="c l" style="left:2248px;top:406px;width:128px">Storage &amp; Organization</div>
  <div class="c r" style="left:2378px;top:406px;width:128px">0.8</div>
  <div class="c r" style="left:1208px;top:438px;width:128px">2</div>
  <div class="c l" style="left:1338px;top:438px;width:128px">1.7 Cubic Foot Compact "Cube" Office Refrigerators</div>
  <div class="c l" style="left:1468px;top:438px;width:128px">Barry French</div>
  <div class="c r" style="left:1598px;top:438px;width:128px">293</div>
  <div class="c r" style="left:1728px;top:438px;width:128px">457.81</div>
  <div class="c r" style="left:1858px;top:438px;width:128px">208.16</div>
  <div class="c r" style="left:1988px;top:438px;width:128px">68.02</div>
  <div class="c l" style="left:2118px;top:438px;width:128px">Nunavut</div>
  <div class="c l" style="left:2248px;top:438px;width:128px">Appliances</div>
  <div class="c r" style="left:2378px;top:438px;width:128px">0.58</div>
  <div class="c r" style="left:1208px;top:470px;width:128px">3</div>
  <div class="c l" style="left:1338px;top:470px;width:128px">Cardinal Slant-D® Ring Binder, Heavy Gauge Vinyl</div>
  <div class="c l" style="left:1468px;top:470px;width:128px">Barry French</div>
  <div class="c r" style="left:1598px;top:470px;width:128px">293</div>
  <div class="c r" style="left:1728px;top:470px;width:128px">46.71</div>
  <div class="c r" style="left:1858px;top:470px;width:128px">8.69</div>
  <div class="c r" style="left:1988px;top:470px;width:128px">2.99</div>
  <div class="c l" style="left:2118px;top:470px;width:128px">Nunavut</div>
  <div class="c l" style="left:2248px;top:470px;width:128px">Binders and Binder Accessories</div>
  <div class="c r" style="left:2378px;top:470px;width:128px">0.39</div>
  <div class="c r" style="left:1208px;top:502px;width:128px">4</div>
  <div class="c l" style="left:1338px;top:502px;width:128px">R380</div>
  <div class="c l" style="left:1468px;top:502px;width:128px">Clay Rozendal</div>
  <div class="c r" style="left:1598px;top:502px;width:128px">483</div>
  <div class="c r" style="left:1728px;top:502px;width:128px">1198.97</div>
  <div class="c r" style="left:1858px;top:502px;width:128px">195.99</div>
  <div class="c r" style="left:1988px;top:502px;width:128px">3.99</div>
  <div class="c l" style="left:2118px;top:502px;width:128px">Nunavut</div>
  <div class="c l" style="left:2248px;top:502px;width:128px">Telephones and Communication</div>
  <div class="c r" style="left:2378px;top:502px;width:128px">0.58</div>
  <div class="c r" style="left:1208px;top:534px;width:128px">5</div>
  <div class="c l" style="left:1338px;top:534px;width:128px">Holmes HEPA Air Purifier</div>
  <div class="c l" style="left:1468px;top:534px;width:128px">Carlos Soltero</div>
  <div class="c r" style="left:1598px;top:534px;width:128px">515</div>
  <div class="c r" style="left:1728px;top:534px;width:128px">30.94</div>
  <div class="c r" style="left:1858px;top:534px;width:128px">21.78</div>
  <div class="c r" style="left:1988px;top:534px;width:128px">5.94</div>
  <div class="c l" style="left:2118px;top:534px;width:128px">Nunavut</div>
  <div class="c l" style="left:2248px;top:534px;width:128px">Appliances</div>
  <div class="c r" style="left:2378px;top:534px;width:128px">0.5</div>
  <div class="c r" style="left:1208px;top:566px;width:128px">6</div>
  <div class="c l" style="left:1338px;top:566px;width:128px">G.E. Longer-Life Indoor Recessed Floodlight Bulbs</div>
  <div class="c l" style="left:1468px;top:566px;width:128px">Carlos Soltero</div>
  <div class="c r" style="left:1598px;top:566px;width:128px">515</div>
  <div class="c r" style="left:1728px;top:566px;width:128px">4.43</div>
  <div class="c r" style="left:1858px;top:566px;width:128px">6.64</div>
  <div class="c r" style="left:1988px;top:566px;width:128px">4.95</div>
  <div class="c l" style="left:2118px;top:566px;width:128px">Nunavut</div>
  <div class="c l" style="left:2248px;top:566px;width:128px">Office Furnishings</div>
  <div class="c r" style="left:2378px;top:566px;width:128px">0.37</div>
  <div class="c r" style="left:1208px;top:598px;width:128px">7</div>
  <div class="c l" style="left:1338px;top:598px;width:128px">Angle-D Binders with Locking Rings, Label Holders</div>
  <div class="c l" style="left:1468px;top:598px;width:128px">Carl Jackson</div>
  <div class="c r" style="left:1598px;top:598px;width:128px">613</div>
  <div class="c r" style="left:1728px;top:598px;width:128px">-54.04</div>
  <div class="c r" style="left:1858px;top:598px;width:128px">7.3</div>
  <div class="c r" style="left:1988px;top:598px;width:128px">7.72</div>
  <div class="c l" style="left:2118px;top:598px;width:128px">Nunavut</div>
  <div class="c l" style="left:2248px;top:598px;width:128px">Binders and Binder Accessories</div>
  <div class="c r" style="left:2378px;top:598px;width:128px">0.38</div>
  <div class="c r" style="left:1208px;top:630px;width:128px">8</div>
  <div class="c l" style="left:1338px;top:630px;width:128px">SAFCO Mobile Desk Side File, Wire Frame</div>
  <div class="c l" style="left:1468px;top:630px;width:128px">Carl Jackson</div>
  <div class="c r" style="left:1598px;top:630px;width:128px">613</div>
  <div class="c r" style="left:1728px;top:630px;width:128px">127.7</div>
  <div class="c r" style="left:1858px;top:630px;width:128px">42.76</div>
  <div class="c r" style="left:1988px;top:630px;width:128px">6.22</div>
  <div class="c l" style="left:2118px;top:630px;width:128px">Nunavut</div>
  <div class="c l" style="left:2248px;top:630px;width:258px">Storage &amp; Organization</div>
  <div class="c r" style="left:1208px;top:662px;width:128px">9</div>
  <div class="c l" style="left:1338px;top:662px;width:128px">SAFCO Commercial Wire Shelving, Black</div>
  <div class="c l" style="left:1468px;top:662px;width:128px">Monica Federle</div>
  <div class="c r" style="left:1598px;top:662px;width:128px">643</div>
  <div class="c r" style="left:1728px;top:662px;width:128px">-695.26</div>
  <div class="c r" style="left:1858px;top:662px;width:128px">138.14</div>
  <div class="c r" style="left:1988px;top:662px;width:128px">35</div>
  <div class="c l" style="left:2118px;top:662px;width:128px">Nunavut</div>
  <div class="c l" style="left:2248px;top:662px;width:258px">Storage &amp; Organization</div>
  <div class="c r" style="left:1208px;top:694px;width:128px">10</div>
  <div class="c l" style="left:1338px;top:694px;width:128px">Xerox 198</div>
  <div class="c l" style="left:1468px;top:694px;width:128px">Dorothy Badders</div>
  <div class="c r" style="left:1598px;top:694px;width:128px">678</div>
  <div class="c r" style="left:1728px;top:694px;width:128px">-226.36</div>
  <div class="c r" style="left:1858px;top:694px;width:128px">4.98</div>
  <div class="c r" style="left:1988px;top:694px;width:128px">8.33</div>
  <div class="c l" style="left:2118px;top:694px;width:128px">Nunavut</div>
  <div class="c l" style="left:2248px;top:694px;width:128px">Paper</div>
  <div class="c r" style="left:2378px;top:694px;width:128px">0.38</div>
  <div class="c l" style="left:1208px;top:726px;width:908px;letter-spacing:-.09px">Evaluation Only. Created with Aspose.Cells for Java.Copyright 2003 - 2022 Aspose Pty Ltd.</div>
  <svg style="left:1162px;top:363px" width="46" height="42" viewBox="0 0 46 42"><path d="M40 7V36H11Z" fill="#cdcdcd"/></svg>
  </div></div>
  <!-- sheet tab bar -->
  <div id="sheetbar"></div>
  <div id="sheettab"></div>
  <span class="t" style="left:1321.600px;top:848.300px;font-size:23.600px;font-weight:bold;color:#3d8655">SampleJson_out</span>
  <div class="abs" style="left:1624px;top:838px;width:2px;height:40px;background:#dadada"></div>
  <!-- status bar -->
  <div id="xstatus"></div>
  <span class="t" style="left:1212px;top:898.500px;font-size:22.600px;color:#4e4e4e;letter-spacing:.35px">Ready</span>
  <div class="abs" style="left:2340px;top:888px;width:74px;height:46px;background:#a9a9a9"></div>
  <div class="abs" style="left:2602px;top:906px;width:200px;height:8px;border-radius:4px;background:#a5a5a5"></div>
  <div class="abs" style="left:2685.500px;top:893px;width:32px;height:32px;border-radius:50%;background:#fff;box-shadow:0 1px 3px rgba(0,0,0,.45)"></div>
  <div class="abs" style="left:2572px;top:907px;width:16px;height:4px;background:#6e6e6e"></div>
  <div id="xshadow"></div>
<svg style="left:0;top:0" width="2802" height="940" viewBox="0 0 2802 940">
  <defs>
    <path id="dd" d="M0 0H10L5 7.500Z" fill="#858585"/>
    <linearGradient id="tan" x1="0" y1="0" x2="0" y2="1"><stop offset="0" stop-color="#e6cda3"/><stop offset="1" stop-color="#d9b98a"/></linearGradient>
    <linearGradient id="brsh" x1="0" y1="0" x2="1" y2="1"><stop offset="0" stop-color="#f4f4f4"/><stop offset="1" stop-color="#b4b4b4"/></linearGradient>
    <g id="brush">
      <path d="M27 3c3-3 7 0 5 3.500L21 21l-6-4Z" fill="url(#brsh)" stroke="#a8a8a8" stroke-width=".8"/>
      <path d="M15 16.500c4 .5 6.500 3 6 6.500-1 6-7 9.500-17 9 4-2.500 4.500-5 5-8.500.5-4 3-7 6-7Z" fill="#7da5e0"/>
    </g>
  </defs>
  <!-- title bar icons -->
  <g fill="#fff">
    <path d="M1372 10L1388.500 24.500L1385.800 27.300L1372 15.200L1358.200 27.300L1355.500 24.500Z"/>
    <path d="M1360 27L1372 16.800L1384 27V38.500a1.500 1.500 0 0 1-1.500 1.500H1376.500V30.500H1367.500V40H1361.500a1.500 1.500 0 0 1-1.500-1.500Z"/>
    <path d="M1422.500 12H1446a2.500 2.500 0 0 1 2.500 2.500V37.500a2.500 2.500 0 0 1-2.500 2.500H1424l-4-3.500V14.500a2.500 2.500 0 0 1 2.500-2.500ZM1425 15V25.500H1444V15ZM1428 31.500V40H1441V31.500ZM1431.500 34.500H1436V38.500H1431.500Z" fill-rule="evenodd"/>
  </g>
  <path d="M1493.500 14L1484 22.500L1493.500 31M1484.500 22.500H1502c11 0 11 15.500 0 15.500" fill="none" stroke="#9cbfa9" stroke-width="3.400" stroke-linecap="round" stroke-linejoin="round"/>
  <path d="M1525.700 23H1536L1530.850 30.900Z" fill="#d2e2d7"/>
  <path d="M1563.500 22A13.600 13.600 0 1 0 1579 13.600M1591.500 12.600L1579 13.600L1580.500 25" fill="none" stroke="#fff" stroke-width="3.400" stroke-linecap="round" stroke-linejoin="round"/>
  <rect x="1632.700" y="20.400" width="15" height="2.400" fill="#fff"/>
  <path d="M1632.700 26.700H1647.700L1640.200 35Z" fill="#fff"/>
  <!-- doc icon -->
  <path d="M1948 11H1961.500L1970 19.500V39.600H1948Z" fill="#b4cbbc"/>
  <path d="M1961.500 11L1970 19.500H1961.500Z" fill="#a3bfae"/>
  <path d="M1961.300 27.200a2.600 2.600 0 1 1 0 .100M1964 24.300V30.500M1966.800 30.500l-.900 2" fill="none" stroke="#9fbaa9" stroke-width="1.200"/>
  <rect x="1944" y="21" width="14.400" height="12" rx="2" fill="#8ba796"/>
  <path d="M1948.200 23.800L1954.200 30.400M1954.200 23.800L1948.200 30.400" stroke="#dde8e0" stroke-width="1.500"/>
  <!-- search -->
  <circle cx="2547.200" cy="22.800" r="9.300" fill="none" stroke="#fff" stroke-width="2.200"/>
  <path d="M2553.800 29.400L2560.200 36" stroke="#fff" stroke-width="2.200"/>
  <path d="M2563.300 23.300L2568.050 28.200L2572.800 23.300" fill="none" stroke="#fff" stroke-width="1.900"/>
  <rect x="2786" y="80" width="8" height="10" rx="3" fill="#fff"/>

  <!-- paste -->
  <rect x="1192" y="120" width="44" height="49.500" rx="3.500" fill="url(#tan)" stroke="#cfb083" stroke-width="1"/>
  <path d="M1204.500 129.700a4.600 4.600 0 0 1 0-9.200h3.600a5.800 5.800 0 0 1 11.400 0h3.600a4.600 4.600 0 0 1 0 9.200Z" fill="#8e8e8e"/>
  <circle cx="1213.800" cy="119.800" r="2.100" fill="#f0e2c8"/>
  <path d="M1207.600 136H1229.500L1238.500 145V172.600H1207.600Z" fill="#fbfbfb" stroke="#b9b9b9" stroke-width="1"/>
  <path d="M1229.500 136V145H1238.500Z" fill="#e4e4e4" stroke="#b9b9b9" stroke-width="1"/>
  <use href="#dd" x="1258" y="142.200"/>
  <!-- cut -->
  <path d="M1298.800 109.400L1302.600 107.400L1315.800 128.500L1312.600 130.500Z" fill="#5a5a5a"/><path d="M1321.200 109.400L1317.400 107.400L1304.200 128.500L1307.400 130.500Z" fill="#5a5a5a"/>
  <circle cx="1302" cy="134" r="4.600" fill="#f4f4f4" stroke="#6d9fdd" stroke-width="1.800"/>
  <circle cx="1318" cy="134" r="4.600" fill="#f4f4f4" stroke="#6d9fdd" stroke-width="1.800"/>
  <!-- copy -->
  <path d="M1297.500 164.500H1314V184.500H1297.500Z" fill="#fff" stroke="#b5b5b5" stroke-width="1"/>
  <path d="M1306 155.500H1316.500L1322.500 161.500V176.500H1306Z" fill="#fff" stroke="#b5b5b5" stroke-width="1"/>
  <path d="M1316.500 155.500V161.500H1322.500" fill="#ececec" stroke="#b5b5b5" stroke-width="1"/>
  <use href="#dd" x="1340" y="166"/>
  <!-- format painter -->
  <path d="M1319.500 203.500c2.500-2.500 7 .5 5 4l-4.500 7-6-3.800Z" fill="#ececec" stroke="#b0b0b0" stroke-width=".9"/>
  <path d="M1309.500 208l12 8-3 5.500-13-8.500Z" fill="#f6f6f6" stroke="#b0b0b0" stroke-width=".9"/>
  <path d="M1304.500 212.500l13.500 9-6 8.500c-6-3-13-8-17.500-13.500Z" fill="#d8cfc2"/>
  <path d="M1298 214.500l16.500 11-2.800 4.300c-6-3-13-8-17.500-13.500Z" fill="#78a6e6"/>
  <!-- font dd arrows -->
  <use href="#dd" x="1582" y="136"/>
  <use href="#dd" x="1696.400" y="136"/>
  <path d="M1760 141.700H1774L1767 133.900Z" fill="#6fa1e2"/>
  <path d="M1815 137H1829L1822 144.700Z" fill="#6fa1e2"/>
  <use href="#dd" x="1572.400" y="196.500"/>
  <!-- border icon -->
  <g stroke="#b4b4b4" stroke-width="2" stroke-dasharray="2 3.200" fill="none">
    <path d="M1611 184H1645M1611 199.500H1645M1612 184V214M1628 184V214M1644 184V214"/>
  </g>
  <rect x="1610.900" y="214.500" width="34.200" height="2.600" fill="#5a5a5a"/>
  <use href="#dd" x="1660" y="196.300"/>
  <!-- bucket -->
  <path d="M1709.500 185.500L1722 198L1709 206.500L1698 195.500Z" fill="#fdfdfd" stroke="#8e8e8e" stroke-width="1.400" stroke-linejoin="round"/>
  <path d="M1704.500 189.500L1717.500 202.500" stroke="#78a6e6" stroke-width="3.400"/>
  <path d="M1711 188v-5.500a2.200 2.200 0 0 1 4.400 0V191" fill="none" stroke="#6e6e6e" stroke-width="1.500"/>
  <path d="M1716.500 190.500c5 1 6.500 5.500 5.500 11.500-2-.5-3-2-3-4s-1-4.500-3.500-5.500Z" fill="#6d9fdd"/>
  <use href="#dd" x="1744" y="196.300"/>
  <use href="#dd" x="1824" y="196.300"/>
  <!-- alignment icons -->
  <g fill="#6c6c6c">
    <rect x="1892.200" y="111.900" width="23.700" height="2.200"/><rect x="1892.200" y="117.800" width="23.700" height="2.200"/>
    <rect x="1946" y="119.800" width="23.800" height="2.200"/><rect x="1946" y="125.700" width="23.800" height="2.200"/>
    <rect x="2000" y="128.600" width="23.900" height="2.200"/><rect x="2000" y="134" width="23.900" height="2.200"/>
    <rect x="1892.200" y="159.800" width="21.400" height="2.200"/><rect x="1892.200" y="165.800" width="13.400" height="2.200"/><rect x="1892.200" y="171.800" width="25.400" height="2.200"/><rect x="1892.200" y="177.900" width="17.500" height="2.200"/>
    <rect x="1947.200" y="159.800" width="21.400" height="2.200"/><rect x="1951.600" y="165.800" width="12.600" height="2.200"/><rect x="1946" y="171.800" width="23.800" height="2.200"/><rect x="1949.900" y="177.900" width="16" height="2.200"/>
    <rect x="2001.700" y="159.800" width="22.200" height="2.200"/><rect x="2010.900" y="165.800" width="13" height="2.200"/><rect x="1998" y="171.800" width="25.900" height="2.200"/><rect x="2006.700" y="177.900" width="17.200" height="2.200"/>
    <rect x="1902" y="205.700" width="16" height="2.200"/><rect x="1908" y="211.700" width="10" height="2.200"/><rect x="1908" y="217.800" width="10" height="2.200"/><rect x="1902" y="223.900" width="16" height="2.200"/>
    <rect x="1956.500" y="205.700" width="15.500" height="2.200"/><rect x="1962" y="211.700" width="10" height="2.200"/><rect x="1962" y="217.800" width="10" height="2.200"/><rect x="1956.500" y="223.900" width="15.500" height="2.200"/>
  </g>
  <path d="M1888 216L1897 208.200V212.500H1904V219.500H1897V223.900Z" fill="#6fa1e2"/>
  <path d="M1957.600 216L1948.600 208.200V212.500H1942V219.500H1948.600V223.900Z" fill="#6fa1e2"/>
  <path d="M2018.400 231.600L2036 214.300" stroke="#6fa1e2" stroke-width="1.800"/>
  <path d="M2037.800 212.600L2037.300 219.500L2031 213.200Z" fill="#6fa1e2"/>
  <use href="#dd" x="2046" y="212.400"/>
  <!-- wrap text -->
  <rect x="2059.800" y="115.500" width="15" height="19" fill="#fff" stroke="#b0b0b0" stroke-width="1"/>
  <path d="M2063 121H2083M2063 129H2071" stroke="#6c6c6c" stroke-width="1.800"/>
  <path d="M2084.500 115.600C2093.500 116 2097 125.500 2090.500 132L2086.800 129.200C2089.800 125 2089 119.500 2084.500 115.600Z" fill="#6fa1e2"/><path d="M2078 131.400L2088.600 124.600L2086.600 137.800Z" fill="#6fa1e2"/>
  <use href="#dd" x="2106" y="120"/>
  <!-- merge -->
  <rect x="2061.500" y="155.500" width="27.500" height="27" fill="#fff" stroke="#b8b8b8" stroke-width="1"/>
  <path d="M2061.500 161.500H2089M2061.500 176.500H2089M2075.300 155.500V161.500M2075.300 176.500V182.500" stroke="#c4c4c4" stroke-width="1"/>
  <path d="M2065 169L2070.500 164.500V167.800H2080.500V164.500L2086 169L2080.500 173.500V170.200H2070.500V173.500Z" fill="#6fa1e2"/>
  <use href="#dd" x="2106" y="166"/>
  <use href="#dd" x="2233.800" y="142"/>
  <!-- conditional formatting icon -->
  <rect x="2299.500" y="113.500" width="27.500" height="23" fill="#fff" stroke="#b5b5b5" stroke-width="1"/>
  <path d="M2304.500 113.500V136.500M2321.500 113.500V136.500M2299.500 119.200H2327M2299.500 125H2327M2299.500 130.800H2327" stroke="#d0d0d0" stroke-width="1"/>
  <rect x="2304.500" y="114" width="7.500" height="5" fill="#e7a4a4"/>
  <rect x="2304.500" y="119.500" width="11.500" height="5.300" fill="#9ebde8"/>
  <rect x="2304.500" y="125.300" width="17" height="5.300" fill="#e7a4a4"/>
  <rect x="2304.500" y="131" width="7.500" height="5.200" fill="#9ebde8"/>
  <!-- format as table icon -->
  <rect x="2299.500" y="155.500" width="27.500" height="23" fill="#fff" stroke="#b5b5b5" stroke-width="1"/>
  <rect x="2306.500" y="161.300" width="20" height="17" fill="#dfe8f6"/>
  <path d="M2306.400 155.500V178.500M2313.300 155.500V178.500M2320.200 155.500V178.500M2299.500 161.300H2327M2299.500 167H2327M2299.500 172.800H2327" stroke="#c8c8c8" stroke-width="1"/>
  <use href="#brush" x="2300" y="156"/>
  <!-- cell styles icon -->
  <rect x="2299.500" y="201.500" width="27.500" height="23" fill="#fff" stroke="#b5b5b5" stroke-width="1"/>
  <rect x="2306.500" y="207.300" width="20" height="17" fill="#dfe8f6"/>
  <path d="M2306.400 201.500V224.500M2299.500 207.300H2327" stroke="#c8c8c8" stroke-width="1"/>
  <use href="#brush" x="2300" y="202"/>
  <use href="#dd" x="2577" y="120"/>
  <use href="#dd" x="2507.200" y="166.200"/>
  <use href="#dd" x="2453" y="212.200"/>
  <!-- cells icon -->
  <rect x="2637" y="118.500" width="3.800" height="11.500" rx="1.200" fill="#8fb2e2"/>
  <rect x="2681.200" y="118.500" width="3.800" height="11.500" rx="1.200" fill="#8fb2e2"/>
  <path d="M2644.500 124.200L2652.500 118V122H2669.500V118L2677.500 124.200L2669.500 130.500V126.500H2652.500V130.500Z" fill="#8fb2e2"/>
  <rect x="2638.500" y="133.500" width="55" height="39" fill="#fdfdfd" stroke="#b5b5b5" stroke-width="1.200"/>
  <path d="M2649.300 133.500V172.500M2665.800 133.500V172.500M2681.500 133.500V172.500M2638.500 144.200H2693.500M2638.500 160.400H2693.500" stroke="#dadada" stroke-width="1"/>
  <rect x="2649.300" y="144.200" width="16.500" height="16.200" rx="2.500" fill="#95b5e2"/>
  <use href="#dd" x="2705" y="142"/>
  <circle cx="2789" cy="139.750" r="16.800" fill="none" stroke="#8c8c8c" stroke-width="6.400"/>

  <!-- message icon -->
  <circle cx="1193.600" cy="273" r="14" fill="#7d6548"/>
  <path d="M1187.600 267L1199.600 279M1199.600 267L1187.600 279" stroke="#f3e9d4" stroke-width="3.400" stroke-linecap="round"/>
  <!-- formula bar icons -->
  <path d="M1309 325L1315.500 314.500L1322 325Z" fill="#9a9a9a"/>
  <path d="M1309 336L1315.500 346.500L1322 336Z" fill="#9a9a9a"/>
  <path d="M1363 320L1383 342M1383 320L1363 342" stroke="#c9c9c9" stroke-width="4.400"/>
  <path d="M1419.500 333L1428.500 342.500L1446 320.500" fill="none" stroke="#cdcdcd" stroke-width="4.400"/>
  <!-- sheet bar icons -->
  <path d="M1205.800 851.400V870.600L1192 861Z" fill="#b6b6b6"/>
  <path d="M1238 851.400V870.600L1252.300 861Z" fill="#b6b6b6"/>
  <path d="M1578 860.500H1598M1588 850.500V870.500" stroke="#585858" stroke-width="3.600"/>
  <!-- status bar view icons -->
  <rect x="2365.200" y="898" width="23.600" height="22.800" rx="2" fill="none" stroke="#fff" stroke-width="2.600"/>
  <path d="M2373 898V921M2381 898V921M2365 905.600H2389M2365 913.200H2389" stroke="#fff" stroke-width="2.400"/>
  <rect x="2436.200" y="897.800" width="26" height="23.500" rx="1.500" fill="none" stroke="#767676" stroke-width="2"/>
  <rect x="2442.500" y="902.500" width="13.500" height="14.500" fill="none" stroke="#767676" stroke-width="1.800"/>
  <path d="M2445.500 907H2453M2445.500 910H2453M2445.500 913H2453" stroke="#767676" stroke-width="1.400"/>
  <rect x="2507" y="897.800" width="26" height="23.500" rx="1.500" fill="none" stroke="#767676" stroke-width="2"/>
  <path d="M2516 897.800V909.500M2507 909.500H2524.500V897.800" fill="none" stroke="#767676" stroke-width="2"/>
</svg>

</div></div>
</body>
</html>
